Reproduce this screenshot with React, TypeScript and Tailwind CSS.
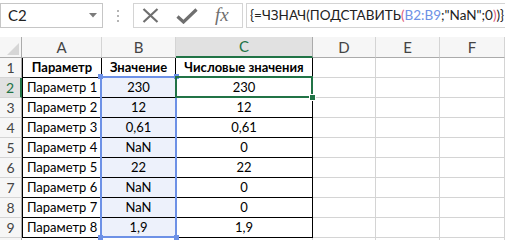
import React from "react";

const cols = [
  { key: "A", w: "w-[80px]" },
  { key: "B", w: "w-[74px]" },
  { key: "C", w: "w-[137px]" },
  { key: "D", w: "w-[63px]" },
  { key: "E", w: "w-[64px]" },
  { key: "F", w: "w-[65px]" },
];

const data: [string, string, string][] = [
  ["Параметр 1", "230", "230"],
  ["Параметр 2", "12", "12"],
  ["Параметр 3", "0,61", "0,61"],
  ["Параметр 4", "NaN", "0"],
  ["Параметр 5", "22", "22"],
  ["Параметр 6", "NaN", "0"],
  ["Параметр 7", "NaN", "0"],
  ["Параметр 8", "1,9", "1,9"],
];

function RowHeader({ n, active }: { n: string; active?: boolean }) {
  return (
    <div
      className={
        "w-[22px] shrink-0 h-full flex items-center justify-center text-[14px] border-b border-[#d4d4d4] " +
        (active
          ? "bg-[#e1e1e1] text-[#217346] border-r-2 border-r-[#217346]"
          : "bg-[#f6f6f6] text-[#444] border-r border-r-[#ababab]")
      }
    >
      {n}
    </div>
  );
}

function Empty({ w }: { w: string }) {
  return <div className={w + " shrink-0 h-full border-r border-b border-[#d4d4d4]"} />;
}

export default function App() {
  return (
    <div className="w-[505px] h-[240px] overflow-hidden bg-white text-[13px] text-black font-['Lato','Liberation_Sans',sans-serif]">
      {/* Toolbar */}
      <div className="h-[37px] flex items-start pt-[3px]">
        <div className="w-[103px] shrink-0 h-[25px] border border-[#c6c6c6] flex items-center justify-between pl-[7px] pr-[5px] text-[#222] text-[15px]">
          <span>C2</span>
          <svg width="8" height="5" viewBox="0 0 8 5">
            <path d="M0 0h8L4 4.5z" fill="#7b7b7b" />
          </svg>
        </div>
        <div className="w-[30px] shrink-0 h-[25px] flex flex-col items-center justify-center gap-[3px]">
          <div className="w-[2px] h-[2px] bg-[#b5b5b5]" />
          <div className="w-[2px] h-[2px] bg-[#b5b5b5]" />
          <div className="w-[2px] h-[2px] bg-[#b5b5b5]" />
        </div>
        <div className="w-[110px] shrink-0 h-[25px] border border-[#d4d4d4] flex items-center pl-[8px] gap-[17px]">
          <svg width="17" height="15" viewBox="0 0 17 15">
            <path d="M1.5 1L15.5 14M15.5 1L1.5 14" stroke="#6f6f6f" strokeWidth="2.2" />
          </svg>
          <svg width="22" height="16" viewBox="0 0 22 16">
            <path d="M1.5 8.5L7.5 14L20.5 1.5" stroke="#6f6f6f" strokeWidth="3.2" fill="none" />
          </svg>
          <span className="text-[#6f6f6f] italic text-[19px] leading-none font-['Liberation_Serif',serif] -mt-[2px]">
            fx
          </span>
        </div>
        <div className="flex-1 min-w-0 overflow-hidden h-[25px] border-l border-t border-b border-[#d4d4d4] ml-[3px] flex items-center pl-[3px] text-[13.5px] whitespace-nowrap text-[#222]">
          <span>{"{=ЧЗНАЧ(ПОДСТАВИТЬ"}</span>
          <span className="text-[#e0607e]">(</span>
          <span className="text-[#6d91e6]">B2:B9</span>
          <span>;"NaN";0</span>
          <span className="text-[#e0607e]">)</span>
          <span>{")}"}</span>
        </div>
      </div>

      {/* Grid */}
      <div className="relative">
        {/* Header row */}
        <div className="flex h-[21px] text-[15px]">
          <div className="w-[22px] shrink-0 h-full bg-[#f6f6f6] border-r border-b border-[#ababab] relative">
            <svg className="absolute right-[2px] bottom-[2px]" width="12" height="12" viewBox="0 0 12 12">
              <path d="M12 0V12H0z" fill="#d6d6d6" />
            </svg>
          </div>
          {cols.map((c) =>
            c.key === "C" ? (
              <div
                key={c.key}
                className={c.w + " shrink-0 h-full flex items-center justify-center bg-[#e1e1e1] text-[#217346] border-r border-r-[#ababab] border-b-2 border-b-[#217346]"}
              >
                {c.key}
              </div>
            ) : (
              <div
                key={c.key}
                className={c.w + " shrink-0 h-full flex items-center justify-center bg-[#f6f6f6] text-[#444] border-r border-r-[#d4d4d4] border-b border-b-[#ababab]"}
              >
                {c.key}
              </div>
            )
          )}
        </div>

        {/* Row 1 */}
        <div className="flex h-[20px]">
          <RowHeader n="1" />
          <div className="w-[80px] shrink-0 h-full border-l border-r border-b border-black font-bold flex items-center justify-center">
            Параметр
          </div>
          <div className="w-[74px] shrink-0 h-full border-r border-b border-black font-bold flex items-center justify-center">
            Значение
          </div>
          <div className="w-[137px] shrink-0 h-full border-r border-b border-black font-bold flex items-center justify-center whitespace-nowrap">
            Числовые значения
          </div>
          <Empty w="w-[63px]" />
          <Empty w="w-[64px]" />
          <Empty w="w-[65px]" />
        </div>

        {data.map((r, i) => (
          <div key={i} className="flex h-[20px]">
            <RowHeader n={String(i + 2)} active={i === 0} />
            <div className="w-[80px] shrink-0 h-full border-l border-r border-b border-black flex items-center pl-[4px] whitespace-nowrap">
              {r[0]}
            </div>
            <div className="w-[74px] shrink-0 h-full bg-[#edf1fb] border-r border-b border-black flex items-center justify-center">
              {r[1]}
            </div>
            <div className="w-[137px] shrink-0 h-full border-r border-b border-black flex items-center justify-center">
              {r[2]}
            </div>
            <Empty w="w-[63px]" />
            <Empty w="w-[64px]" />
            <Empty w="w-[65px]" />
          </div>
        ))}

        {/* Row 10 (partial) */}
        <div className="flex h-[20px]">
          <RowHeader n="" />
          {cols.map((c) => (
            <Empty key={c.key} w={c.w} />
          ))}
        </div>

        {/* Blue range highlight B2:B9 */}
        <div className="absolute left-[100px] top-[39px] w-[77px] h-[162px] border-2 border-[#6d91e6] pointer-events-none" />
        <div className="absolute left-[98px] top-[37px] w-[5px] h-[5px] bg-[#6d91e6]" />
        <div className="absolute left-[174px] top-[37px] w-[5px] h-[5px] bg-[#6d91e6]" />
        <div className="absolute left-[98px] top-[198px] w-[5px] h-[5px] bg-[#6d91e6]" />
        <div className="absolute left-[174px] top-[198px] w-[5px] h-[5px] bg-[#6d91e6]" />

        {/* Green active cell C2 */}
        <div className="absolute left-[175px] top-[39px] w-[138px] h-[22px] border-2 border-[#217346] pointer-events-none" />
        <div className="absolute left-[309px] top-[57px] w-[7px] h-[7px] bg-[#217346] border border-white" />
      </div>
    </div>
  );
}
